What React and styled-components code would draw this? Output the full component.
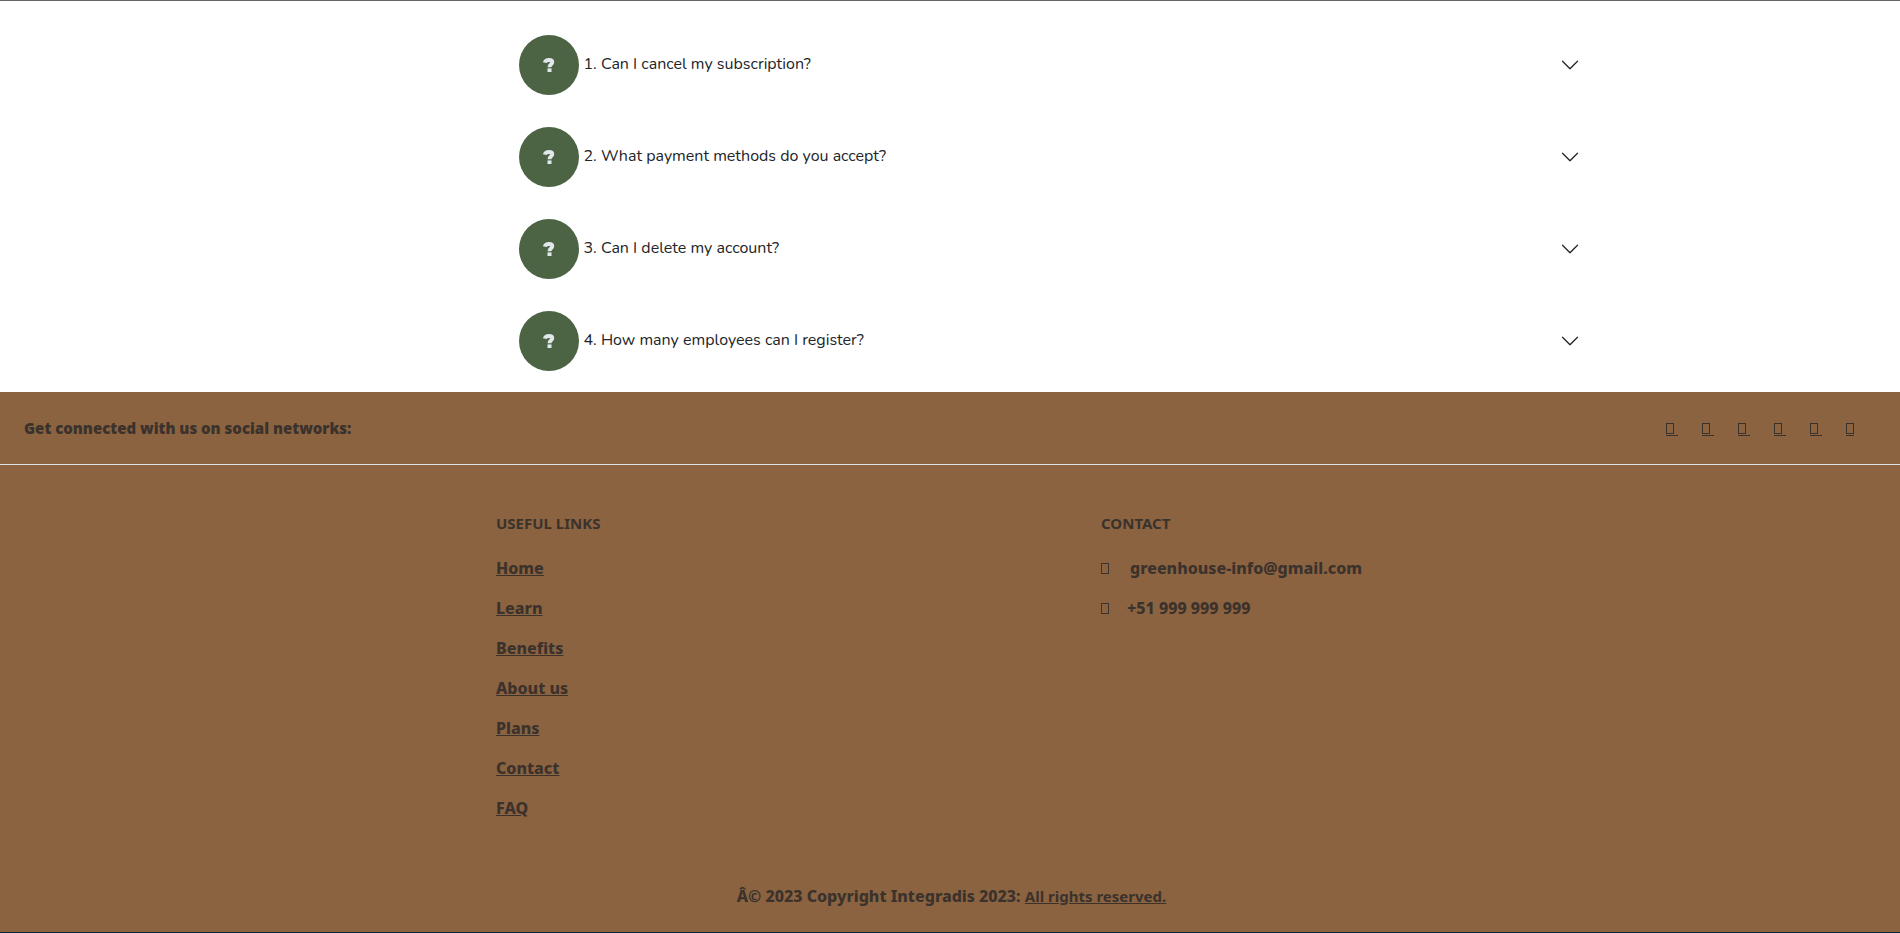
import React, { useState } from "react";
import styled, { createGlobalStyle } from "styled-components";

const GlobalStyle = createGlobalStyle`
  *, *::before, *::after { box-sizing: border-box; }
  body {
    margin: 0;
    background: #fff;
    color: #212529;
    font-family: "Noto Sans", "Open Sans", sans-serif;
    font-size: 16px;
    line-height: 24px;
  }
`;

const Page = styled.div`
  min-height: 100vh;
  display: flex;
  flex-direction: column;
  border-top: 1px solid #666;
  border-bottom: 1px solid #0f2433;
`;

const Container = styled.div`
  width: 100%;
  max-width: 1323px;
  margin: 0 auto;
  padding: 0 12px 0 15px;
`;

const Questions = styled.div`
  margin-left: 195px;
  padding: 18px 0 5px;
`;

const Question = styled.h2`
  margin: 0;
`;

const QuestionButton = styled.button`
  display: flex;
  align-items: center;
  width: 100%;
  padding: 16px 20px;
  border: 0;
  background: none;
  color: #212529;
  font: 400 16px/24px "Nunito", "Open Sans", sans-serif;
  text-align: left;
  cursor: pointer;
`;

const QuestionText = styled.span`
  padding-bottom: 2px;
`;

const Badge = styled.span`
  flex: none;
  display: grid;
  place-items: center;
  width: 60px;
  height: 60px;
  margin-right: 5px;
  border-radius: 50%;
  background: #4c6444;
  color: #e1e8ec;
`;

const Chevron = styled.svg`
  width: 20px;
  height: 20px;
  margin-left: auto;
  transform: ${(p) => (p.$open ? "rotate(180deg)" : "none")};
`;

const Answer = styled.p`
  margin: 0;
  padding: 16px 20px;
`;

const Footer = styled.footer`
  flex: 1;
  background: #8b6341;
  color: #3b322c;
  font-weight: 800;
`;

const SocialBar = styled.section`
  display: flex;
  justify-content: space-between;
  align-items: center;
  padding: 24px;
  border-bottom: 1px solid #dee2e6;
`;

const SocialTitle = styled.span`
  font-family: "Open Sans", sans-serif;
  font-size: 15px;
  font-weight: 800;
`;

const SocialLinks = styled.nav`
  display: flex;
  gap: 24px;
  margin: 2px 22px 0 0;
`;

const SocialLink = styled.a`
  display: block;
  width: 12px;
  padding-bottom: 1px;
  border-bottom: 1px solid;
  color: inherit;

  &:last-child { width: 8px; }
`;

const Glyph = styled.span`
  display: block;
  width: 8px;
  height: 11px;
  border: 1px solid;
`;

const Columns = styled.div`
  display: flex;
  justify-content: space-around;
  margin: 0 -12px;
  padding: 49px 0 24px;
`;

const Column = styled.section`
  width: ${(p) => p.$width}px;
  padding: 0 12px;
`;

const Heading = styled.h6`
  margin: 0 0 23px;
  font-size: 15px;
  line-height: 19px;
  font-weight: 700;
  text-transform: uppercase;
`;

const Line = styled.p`
  display: flex;
  align-items: center;
  gap: ${(p) => p.$gap || 0}px;
  margin: 0 0 16px;
`;

const Link = styled.a`
  color: inherit;
`;

const RightsLink = styled(Link)`
  font-size: 15px;
  font-weight: 700;
`;

const Copyright = styled.div`
  padding: 24px 24px 24px 27px;
  text-align: center;
`;

const questions = [
  "1. Can I cancel my subscription?",
  "2. What payment methods do you accept?",
  "3. Can I delete my account?",
  "4. How many employees can I register?",
];
const links = ["Home", "Learn", "Benefits", "About us", "Plans", "Contact", "FAQ"];
const networks = ["Facebook", "Twitter", "Google", "Instagram", "LinkedIn", "GitHub"];

function QuestionMark() {
  return (
    <svg width="12" height="14" viewBox="0 0 12 14" aria-hidden="true">
      <path d="M1.800 4.600C2.300 2.600 4 2 6 2C8.200 2 9.300 2.900 9.300 4.200C9.300 6.300 6.500 6.200 6.500 9.200" fill="none" stroke="currentColor" strokeWidth="3.800" />
      <path d="M4.500 10.400h4v3.600h-4z" fill="currentColor" />
    </svg>
  );
}

function FaqItem({ text }) {
  const [open, setOpen] = useState(false);
  return (
    <div>
      <Question>
        <QuestionButton aria-expanded={open} onClick={() => setOpen(!open)}>
          <Badge><QuestionMark /></Badge>
          <QuestionText>{text}</QuestionText>
          <Chevron $open={open} viewBox="0 0 16 16" fill="#212529" aria-hidden="true">
            <path fillRule="evenodd" d="M1.646 4.646a.5.5 0 0 1 .708 0L8 10.293l5.646-5.647a.5.5 0 0 1 .708.708l-6 6a.5.5 0 0 1-.708 0l-6-6a.5.5 0 0 1 0-.708z" />
          </Chevron>
        </QuestionButton>
      </Question>
      {open && <Answer>Please contact us for details.</Answer>}
    </div>
  );
}

export default function App() {
  return (
    <>
      <GlobalStyle />
      <Page>
        <Container as="main">
          <Questions>
            {questions.map((q) => <FaqItem key={q} text={q} />)}
          </Questions>
        </Container>
        <Footer>
          <SocialBar>
            <SocialTitle>Get connected with us on social networks:</SocialTitle>
            <SocialLinks>
              {networks.map((n) => (
                <SocialLink key={n} href="#" aria-label={n}><Glyph /></SocialLink>
              ))}
            </SocialLinks>
          </SocialBar>
          <Container>
            <Columns>
              <Column $width={220}>
                <Heading>Useful links</Heading>
                {links.map((l) => <Line key={l}><Link href="#">{l}</Link></Line>)}
              </Column>
              <Column $width={330}>
                <Heading>Contact</Heading>
                <Line $gap={21}><Glyph />greenhouse-info@gmail.com</Line>
                <Line $gap={18}><Glyph />+51 999 999 999</Line>
              </Column>
            </Columns>
          </Container>
          <Copyright>
            Â© 2023 Copyright Integradis 2023: <RightsLink href="#">All rights reserved.</RightsLink>
          </Copyright>
        </Footer>
      </Page>
    </>
  );
}
